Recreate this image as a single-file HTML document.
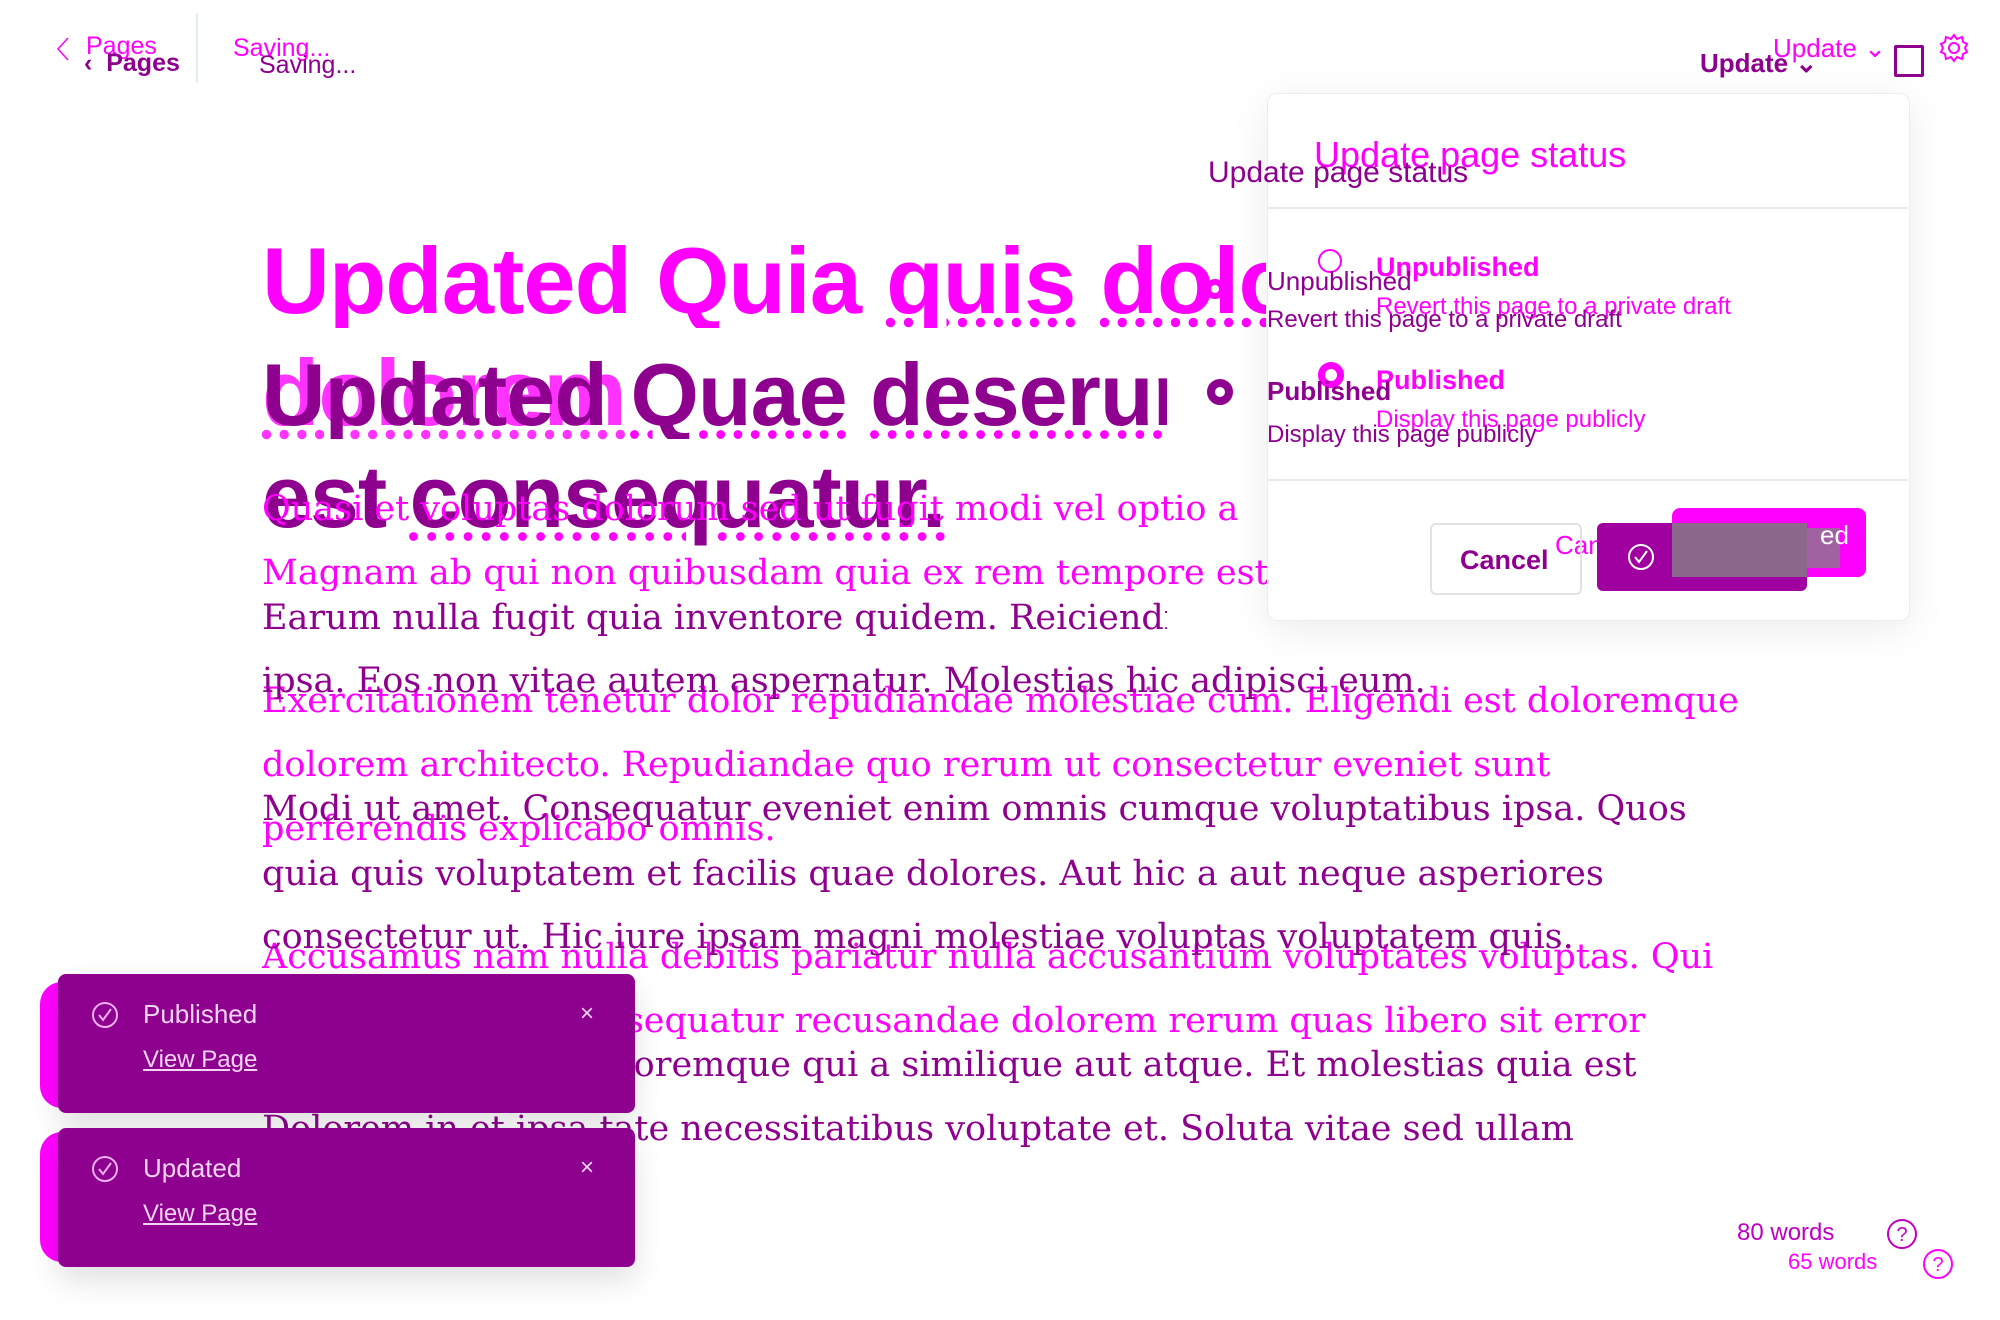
<!DOCTYPE html>
<html><head><meta charset="utf-8"><style>
html,body{margin:0;padding:0;background:#fff;}
body{width:2000px;height:1320px;position:relative;overflow:hidden;font-family:"Liberation Sans",sans-serif;}
.a{position:absolute;white-space:nowrap;}
.m{color:#ff00ff;}
.p{color:#8e008e;}
.ser{font-family:"DejaVu Serif","Liberation Serif",serif;font-size:35px;line-height:35px;}
.h{font-weight:bold;letter-spacing:-1px;}
.clip{overflow:hidden;}
</style></head><body>

<!-- header -->
<svg class="a" style="left:54px;top:36px" width="18" height="26"><path d="M14 2 L4 13 L14 24" fill="none" stroke="#ff00ff" stroke-width="1.5"/></svg>
<div class="a m" style="left:86px;top:34px;font-size:25px;line-height:25px;">Pages</div>
<div class="a p" style="left:84px;top:51px;font-size:25px;line-height:25px;font-weight:bold;">‹ &nbsp;Pages</div>
<div class="a" style="left:196px;top:13px;width:2px;height:70px;background:#e4ecf0;"></div>
<div class="a m" style="left:233px;top:36px;font-size:25px;line-height:25px;">Saving...</div>
<div class="a p" style="left:259px;top:53px;font-size:25px;line-height:25px;">Saving...</div>

<div class="a m" style="left:1773px;top:35px;font-size:26px;line-height:26px;">Update ⌄</div>
<div class="a p" style="left:1700px;top:50px;font-size:26px;line-height:26px;font-weight:bold;">Update ⌄</div>
<div class="a" style="left:1894px;top:45px;width:24px;height:26px;border:3px solid #8e008e;border-radius:2px;"></div>
<svg class="a" style="left:1938px;top:32px" width="32" height="32" viewBox="0 0 32 32"><circle cx="16" cy="16" r="5" fill="none" stroke="#ff00ff" stroke-width="2"/><path d="M16 3 L19 7 L24 5 L25 10 L29 12 L27 16 L29 20 L25 22 L24 27 L19 25 L16 29 L13 25 L8 27 L7 22 L3 20 L5 16 L3 12 L7 10 L8 5 L13 7 Z" fill="none" stroke="#ff00ff" stroke-width="2"/></svg>

<!-- headlines -->
<div class="a m h" style="left:262px;top:234px;font-size:94px;line-height:94px;width:1004px;overflow:hidden;">Updated Quia <span style="text-decoration:underline dotted">quis</span> <span style="text-decoration:underline dotted">dolorem</span></div>
<div class="a m h" style="left:262px;top:346px;font-size:94px;line-height:94px;text-decoration:underline dotted;opacity:.8;">dolorem</div>
<div class="a p h" style="left:262px;top:351px;font-size:88px;line-height:88px;width:905px;overflow:hidden;">Updated <span style="text-decoration:underline dotted #ff00ff">Quae</span> <span style="text-decoration:underline dotted #ff00ff">deserunt</span></div>
<div class="a p h" style="left:262px;top:453px;font-size:88px;line-height:88px;">est <span style="text-decoration:underline dotted #ff00ff">consequatur.</span></div>

<!-- magenta body -->
<div class="a m ser clip" style="left:262px;top:492px;width:1008px;">Quasi et voluptas dolorum sed ut fugit modi vel optio a</div>
<div class="a m ser clip" style="left:262px;top:556px;width:1008px;">Magnam ab qui non quibusdam quia ex rem tempore est</div>
<div class="a m ser" style="left:262px;top:684px;">Exercitationem tenetur dolor repudiandae molestiae cum. Eligendi est doloremque</div>
<div class="a m ser" style="left:262px;top:748px;">dolorem architecto. Repudiandae quo rerum ut consectetur eveniet sunt</div>
<div class="a m ser" style="left:262px;top:812px;">perferendis explicabo omnis.</div>
<div class="a m ser" style="left:262px;top:940px;">Accusamus nam nulla debitis pariatur nulla accusantium voluptates voluptas. Qui</div>
<div class="a m ser" style="left:262px;top:1004px;">Laborum et ipsa consequatur recusandae dolorem rerum quas libero sit error</div>

<!-- purple body -->
<div class="a p ser clip" style="left:262px;top:601px;width:905px;">Earum nulla fugit quia inventore quidem. Reiciendis</div>
<div class="a p ser" style="left:262px;top:664px;">ipsa. Eos non vitae autem aspernatur. Molestias hic adipisci eum.</div>
<div class="a p ser" style="left:262px;top:792px;">Modi ut amet. Consequatur eveniet enim omnis cumque voluptatibus ipsa. Quos</div>
<div class="a p ser" style="left:262px;top:857px;">quia quis voluptatem et facilis quae dolores. Aut hic a aut neque asperiores</div>
<div class="a p ser" style="left:262px;top:920px;">consectetur ut. Hic iure ipsam magni molestiae voluptas voluptatem quis.</div>
<div class="a p ser" style="left:262px;top:1048px;">Dolorum sit quae doloremque qui a similique aut atque. Et molestias quia est</div>
<div class="a p ser" style="left:262px;top:1112px;">Dolorem in et ipsa tate necessitatibus voluptate et. Soluta vitae sed ullam</div>

<!-- magenta popup -->
<div class="a" style="left:1267px;top:93px;width:641px;height:526px;border:1px solid #e8eef2;border-radius:10px;box-shadow:0 8px 40px rgba(0,0,0,0.08);"></div>
<div class="a" style="left:1268px;top:207px;width:640px;height:2px;background:#e6ecf0;"></div>
<div class="a" style="left:1268px;top:479px;width:640px;height:2px;background:#e6ecf0;"></div>
<div class="a m" style="left:1314px;top:137px;font-size:36px;line-height:36px;">Update page status</div>
<div class="a" style="left:1318px;top:249px;width:24px;height:24px;border:2px solid #ff00ff;border-radius:50%;box-sizing:border-box;"></div>
<div class="a m" style="left:1376px;top:254px;font-size:27px;line-height:27px;font-weight:bold;">Unpublished</div>
<div class="a m" style="left:1376px;top:295px;font-size:24px;line-height:24px;">Revert this page to a private draft</div>
<div class="a" style="left:1318px;top:362px;width:26px;height:26px;border:7px solid #ff00ff;border-radius:50%;box-sizing:border-box;"></div>
<div class="a m" style="left:1376px;top:367px;font-size:27px;line-height:27px;font-weight:bold;">Published</div>
<div class="a m" style="left:1376px;top:408px;font-size:24px;line-height:24px;">Display this page publicly</div>
<div class="a m" style="left:1555px;top:532px;font-size:26px;line-height:26px;">Cancel</div>
<div class="a" style="left:1672px;top:508px;width:194px;height:69px;background:#ff00ff;border-radius:8px;"></div>
<div class="a" style="left:1680px;top:528px;width:160px;height:40px;background:#8a7a8a;opacity:.8;"></div>
<div class="a" style="left:1820px;top:522px;color:#fff;font-size:26px;line-height:26px;">ed</div>

<!-- purple popup -->
<div class="a p" style="left:1208px;top:158px;font-size:30px;line-height:30px;">Update page status</div>
<div class="a" style="left:1205px;top:279px;width:20px;height:20px;border:6px solid #ff00ff;border-radius:50%;box-sizing:border-box;"></div>
<div class="a p" style="left:1267px;top:268px;font-size:26px;line-height:26px;">Unpublished</div>
<div class="a p" style="left:1267px;top:308px;font-size:24px;line-height:24px;">Revert this page to a private draft</div>
<div class="a" style="left:1207px;top:379px;width:26px;height:26px;border:8px solid #8e008e;border-radius:50%;box-sizing:border-box;"></div>
<div class="a p" style="left:1267px;top:378px;font-size:26px;line-height:26px;font-weight:bold;">Published</div>
<div class="a p" style="left:1267px;top:423px;font-size:24px;line-height:24px;">Display this page publicly</div>
<div class="a" style="left:1430px;top:523px;width:148px;height:68px;border:2px solid #e2e2e2;border-radius:6px;"></div>
<div class="a p" style="left:1460px;top:547px;font-size:27px;line-height:27px;font-weight:bold;">Cancel</div>
<div class="a" style="left:1597px;top:523px;width:210px;height:68px;background:#a000a0;border-radius:6px;"></div>
<div class="a" style="left:1672px;top:523px;width:135px;height:54px;background:#8a7a8a;opacity:.85;"></div>
<svg class="a" style="left:1626px;top:542px" width="30" height="30"><circle cx="15" cy="15" r="12" fill="none" stroke="#fff" stroke-width="2"/><path d="M9 15 L13 20 L21 9" fill="none" stroke="#fff" stroke-width="2"/></svg>

<!-- word counts -->
<div class="a" style="left:1737px;top:1221px;font-size:24px;line-height:24px;color:#c000c0;">80 words</div>
<svg class="a" style="left:1886px;top:1218px" width="32" height="32"><circle cx="16" cy="16" r="14" fill="none" stroke="#c000c0" stroke-width="2"/><text x="16" y="23" font-size="20" text-anchor="middle" fill="#c000c0" font-family="Liberation Sans">?</text></svg>
<div class="a m" style="left:1788px;top:1251px;font-size:22px;line-height:22px;">65 words</div>
<svg class="a" style="left:1922px;top:1248px" width="32" height="32"><circle cx="16" cy="16" r="14" fill="none" stroke="#ff00ff" stroke-width="2"/><text x="16" y="23" font-size="20" text-anchor="middle" fill="#ff00ff" font-family="Liberation Sans">?</text></svg>

<!-- toasts -->
<div class="a" style="left:40px;top:982px;width:560px;height:126px;background:#ff00ff;border-radius:22px;"></div>
<div class="a" style="left:40px;top:1132px;width:560px;height:130px;background:#ff00ff;border-radius:22px;"></div>
<div class="a" style="left:58px;top:974px;width:577px;height:139px;background:#8e008e;border-radius:8px;box-shadow:0 14px 30px rgba(0,0,0,0.12);"></div>
<div class="a" style="left:58px;top:1128px;width:577px;height:139px;background:#8e008e;border-radius:8px;box-shadow:0 14px 30px rgba(0,0,0,0.12);"></div>
<svg class="a" style="left:90px;top:1000px" width="30" height="30"><circle cx="15" cy="15" r="12" fill="none" stroke="#f0b0f0" stroke-width="2"/><path d="M9 15 L13 20 L21 9" fill="none" stroke="#f0b0f0" stroke-width="2"/></svg>
<div class="a" style="left:143px;top:1001px;font-size:26px;line-height:26px;color:#f4d4f4;">Published</div>
<div class="a" style="left:143px;top:1048px;font-size:24px;line-height:24px;color:#f4d4f4;text-decoration:underline;">View Page</div>
<div class="a" style="left:580px;top:1002px;font-size:24px;line-height:24px;color:#f4d4f4;">×</div>
<svg class="a" style="left:90px;top:1154px" width="30" height="30"><circle cx="15" cy="15" r="12" fill="none" stroke="#f0b0f0" stroke-width="2"/><path d="M9 15 L13 20 L21 9" fill="none" stroke="#f0b0f0" stroke-width="2"/></svg>
<div class="a" style="left:143px;top:1155px;font-size:26px;line-height:26px;color:#f4d4f4;">Updated</div>
<div class="a" style="left:143px;top:1202px;font-size:24px;line-height:24px;color:#f4d4f4;text-decoration:underline;">View Page</div>
<div class="a" style="left:580px;top:1156px;font-size:24px;line-height:24px;color:#f4d4f4;">×</div>

</body></html>
